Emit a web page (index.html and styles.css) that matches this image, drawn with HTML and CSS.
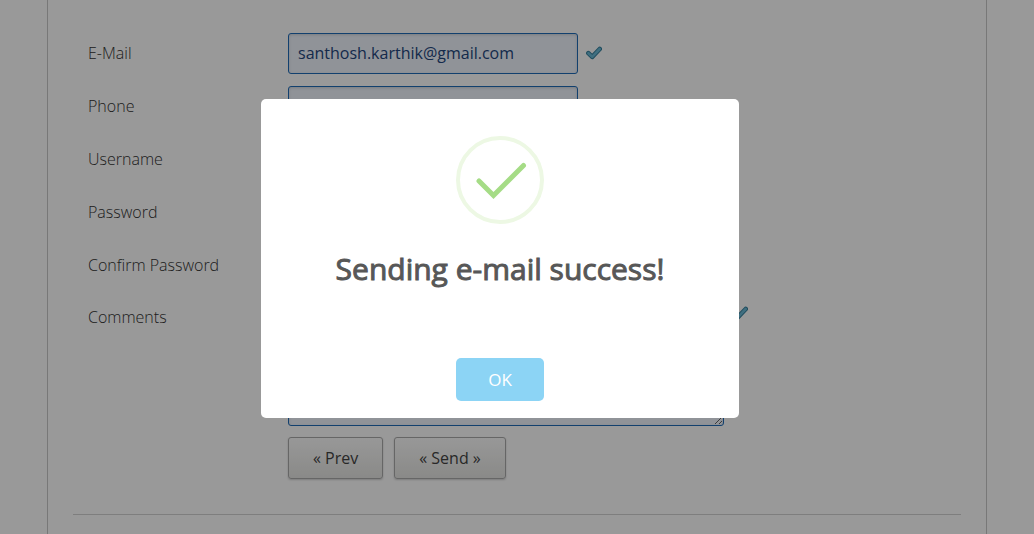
FILE: index.html
```
<!DOCTYPE html>
<html lang="en">
<head>
<meta charset="utf-8">
<meta name="viewport" content="width=device-width, initial-scale=1">
<title>Contact details</title>
<link rel="stylesheet" href="styles.css">
</head>
<body>
<svg class="defs" aria-hidden="true">
  <symbol id="tick" viewBox="0 0 16 14">
    <path d="M2.400 7.200 6.200 10.800 13.700 3" fill="none" stroke="#357f9c" stroke-width="4.600" stroke-linecap="round" stroke-linejoin="round"/>
    <path d="M2.400 7.200 6.200 10.800 13.700 3" fill="none" stroke="#6bb9d6" stroke-width="2.600" stroke-linecap="round" stroke-linejoin="round"/>
  </symbol>
</svg>
<main class="panel">
  <form class="form">
    <div class="row">
      <label class="label" for="email">E-Mail</label>
      <input class="field" id="email" type="email" value="santhosh.karthik@gmail.com">
      <svg class="tick" aria-hidden="true"><use href="#tick"/></svg>
    </div>
    <div class="row">
      <label class="label" for="phone">Phone</label>
      <input class="field" id="phone" type="tel">
    </div>
    <div class="row">
      <label class="label" for="username">Username</label>
      <input class="field" id="username" type="text">
    </div>
    <div class="row">
      <label class="label" for="password">Password</label>
      <input class="field" id="password" type="password">
    </div>
    <div class="row">
      <label class="label" for="confirm">Confirm Password</label>
      <input class="field" id="confirm" type="password">
    </div>
    <div class="row row-area">
      <label class="label" for="comments">Comments</label>
      <textarea class="field field-area" id="comments"></textarea>
      <svg class="tick" aria-hidden="true"><use href="#tick"/></svg>
    </div>
    <div class="actions">
      <button class="button" type="button">« Prev</button>
      <button class="button" type="button">« Send »</button>
    </div>
  </form>
  <hr class="rule">
</main>
<div class="overlay">
  <div class="dialog" role="dialog" aria-modal="true" aria-labelledby="dialog-title">
    <svg class="success" viewBox="0 0 88 88" aria-hidden="true">
      <circle cx="44" cy="44" r="42" fill="none" stroke="#edf8e4" stroke-width="4"/>
      <path d="M23 45 37.500 59.500 67.500 29.500" fill="none" stroke="#a5dc86" stroke-width="5" stroke-linecap="round"/>
    </svg>
    <h2 class="title" id="dialog-title">Sending e-mail success!</h2>
    <button class="ok" type="button">OK</button>
  </div>
</div>
</body>
</html>
```
FILE: styles.css
```
* {
  box-sizing: border-box;
}

body {
  margin: 0;
  background: #fff;
  color: #333;
  font-family: "Open Sans", sans-serif;
  font-size: 16px;
  line-height: 24px;
}

.defs {
  display: none;
}

.panel {
  max-width: 940px;
  min-height: 100vh;
  margin: 0 auto;
  padding: 33px 25px 0;
  border: solid #c8c8c8;
  border-width: 0 1px;
}

.form {
  padding: 0 15px;
}

.row {
  display: flex;
  align-items: flex-start;
  margin-bottom: 12px;
}

.label {
  flex: 0 0 200px;
  padding-top: 8px;
  font-weight: 300;
}

.field {
  width: 290px;
  height: 41px;
  padding: 0 9px 2px;
  border: 1px solid #1e6cb8;
  border-radius: 3px;
  background: #f0f5fd;
  box-shadow: inset 0 1px 3px rgba(0, 0, 0, 0.15);
  color: #24477e;
  font: inherit;
}

.field-area {
  width: 436px;
  height: 128px;
}

.tick {
  width: 16px;
  height: 14px;
  margin: 13px 0 0 8px;
}

.row-area {
  margin-bottom: 11px;
}

.row-area .label {
  padding-top: 7px;
}

.row-area .tick {
  margin-top: 8px;
}

.actions {
  display: flex;
  gap: 11px;
  padding-left: 200px;
}

.button {
  height: 42px;
  padding: 0 24px;
  border: 1px solid #aaa;
  border-radius: 3px;
  background: linear-gradient(#fdfdfd, #e6e6e3);
  box-shadow: 0 1px 2px rgba(0, 0, 0, 0.2);
  color: #444;
  font: inherit;
}

.rule {
  margin: 35px 0 0;
  border: 0;
  border-top: 1px solid #d2d2d2;
}

.overlay {
  position: fixed;
  inset: 0;
  display: flex;
  align-items: center;
  justify-content: center;
  padding: 0 34px 17px 0;
  background: rgba(0, 0, 0, 0.4);
}

.dialog {
  display: flex;
  flex-direction: column;
  align-items: center;
  width: 100%;
  max-width: 478px;
  padding: 37px 17px 17px;
  border-radius: 5px;
  background: #fff;
}

.success {
  width: 88px;
  height: 88px;
}

.title {
  margin: 25px 0 69px;
  color: #575757;
  font-size: 30px;
  font-weight: 400;
  line-height: 40px;
  text-align: center;
  -webkit-text-stroke: 1px #575757;
}

.ok {
  height: 43px;
  padding: 0 32px;
  border: 0;
  border-radius: 5px;
  background: #8cd4f5;
  color: #fff;
  font: inherit;
  font-size: 17px;
}
```
